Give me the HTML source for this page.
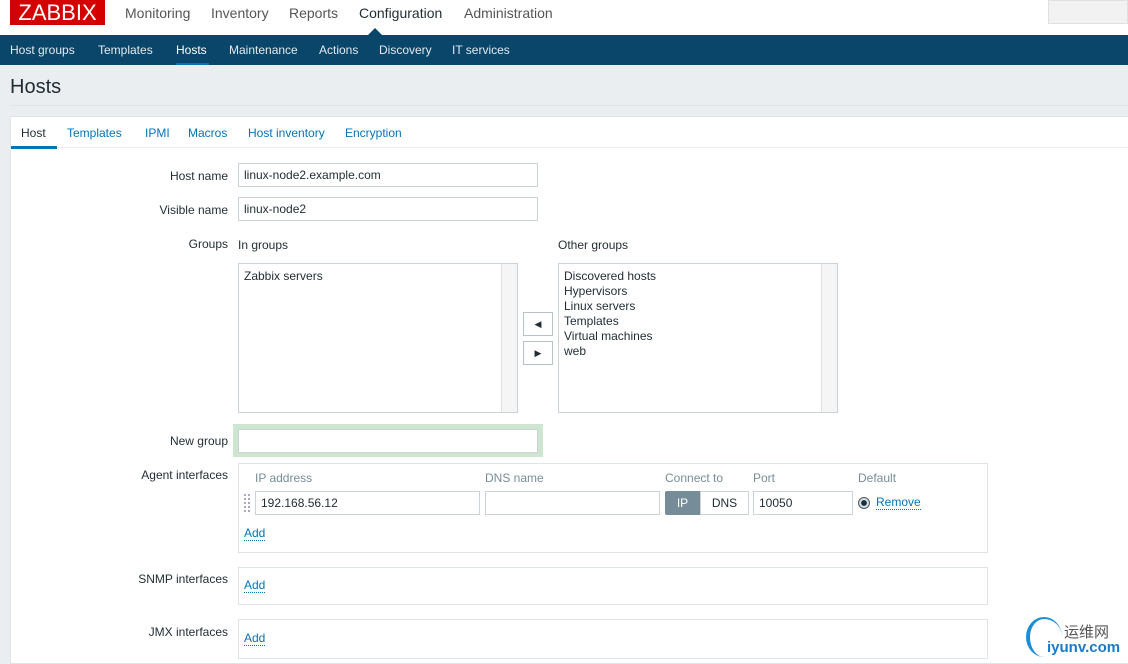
<!DOCTYPE html><html><head><meta charset="utf-8"><style>
*{box-sizing:border-box;margin:0;padding:0}
body{width:1128px;height:664px;overflow:hidden;background:#ebeef0;font-family:"Liberation Sans",Arial,sans-serif;font-size:12px;color:#1f2c33;position:relative}
.a{position:absolute}
.top{left:0;top:0;width:1128px;height:35px;background:#fff}
.logo{left:10px;top:0;width:95px;height:25px;background:#d40000;color:#fff;font-size:22px;line-height:25px;text-align:center;letter-spacing:0}
.mm{top:5px;font-size:14px;color:#555}
.nav{left:0;top:35px;width:1128px;height:30px;background:#0a466a}
.nav span{position:absolute;top:8px;color:#e2e9ee;font-size:12px}
.panel{left:10px;top:116px;width:1118px;height:548px;background:#fff;border:1px solid #dfe4e7;border-right:none}
.tab{top:126px;color:#0275b8}
.lbl{color:#1f2c33;text-align:right;width:200px;left:28px}
.in{border:1px solid #cbd3d8;background:#fff;height:24px;padding:0 5px;line-height:22px;font-size:12px}
.lnk{color:#0275b8;border-bottom:1px dotted #0275b8;line-height:13px}
.gray{color:#768d99}
.box{border:1px solid #dfe4e7}
.lb{border:1px solid #cbd3d8;background:#fff;padding:5px;line-height:15px}
.sb{position:absolute;right:0;top:0;width:16px;height:100%;background:#f5f5f5;border-left:1px solid #e0e0e0}
.btn{border:1px solid #b7c3ca;background:#fff;width:30px;height:24px;text-align:center;line-height:22px;font-size:9px}
</style></head><body>
<div class="a top"></div>
<div class="a logo">ZABBIX</div>
<div class="a mm" style="left:125px">Monitoring</div>
<div class="a mm" style="left:211px">Inventory</div>
<div class="a mm" style="left:289px">Reports</div>
<div class="a mm" style="left:359px;color:#1f2c33">Configuration</div>
<div class="a mm" style="left:464px">Administration</div>
<div class="a" style="left:1048px;top:0;width:80px;height:24px;background:#f2f2f2;border:1px solid #e0e0e0"></div>
<div class="a" style="top:28px;width:0;height:0;border-left:7px solid transparent;border-right:7px solid transparent;border-bottom:7px solid #0a466a;left:368px"></div>
<div class="a nav">
<span style="left:10px">Host groups</span><span style="left:98px">Templates</span><span style="left:176px;color:#fff">Hosts</span><span style="left:229px">Maintenance</span><span style="left:319px">Actions</span><span style="left:379px">Discovery</span><span style="left:452px">IT services</span>
<div class="a" style="left:176px;top:28px;width:33px;height:2px;background:#0275b8"></div>
</div>
<div class="a" style="left:10px;top:76px;font-size:20px;color:#1f2c33">Hosts</div>
<div class="a" style="left:10px;top:105px;width:1118px;height:1px;background:#dfe4e7"></div>
<div class="a panel"></div>
<div class="a" style="left:11px;top:147px;width:1117px;height:1px;background:#ebeef0"></div>
<div class="a tab" style="left:21px;color:#1f2c33">Host</div>
<div class="a" style="left:11px;top:146px;width:46px;height:3px;background:#0275b8"></div>
<div class="a tab" style="left:67px">Templates</div>
<div class="a tab" style="left:145px">IPMI</div>
<div class="a tab" style="left:188px">Macros</div>
<div class="a tab" style="left:248px">Host inventory</div>
<div class="a tab" style="left:345px">Encryption</div>

<div class="a lbl" style="top:169px">Host name</div>
<div class="a in" style="left:238px;top:163px;width:300px">linux-node2.example.com</div>
<div class="a lbl" style="top:203px">Visible name</div>
<div class="a in" style="left:238px;top:197px;width:300px">linux-node2</div>
<div class="a lbl" style="top:237px">Groups</div>
<div class="a" style="left:238px;top:238px">In groups</div>
<div class="a" style="left:558px;top:238px">Other groups</div>
<div class="a lb" style="left:238px;top:263px;width:280px;height:150px">Zabbix servers<div class="sb"></div></div>
<div class="a lb" style="left:558px;top:263px;width:280px;height:150px">Discovered hosts<br>Hypervisors<br>Linux servers<br>Templates<br>Virtual machines<br>web<div class="sb"></div></div>
<div class="a btn" style="left:523px;top:312px">◀</div>
<div class="a btn" style="left:523px;top:341px">▶</div>
<div class="a lbl" style="top:434px">New group</div>
<div class="a" style="left:233px;top:424px;width:310px;height:33px;background:#cde6cf"></div>
<div class="a in" style="left:238px;top:429px;width:300px"></div>
<div class="a lbl" style="top:468px">Agent interfaces</div>
<div class="a box" style="left:238px;top:463px;width:750px;height:90px"></div>
<div class="a gray" style="left:255px;top:471px">IP address</div>
<div class="a gray" style="left:485px;top:471px">DNS name</div>
<div class="a gray" style="left:665px;top:471px">Connect to</div>
<div class="a gray" style="left:753px;top:471px">Port</div>
<div class="a gray" style="left:858px;top:471px">Default</div>
<div class="a" style="left:244px;top:494px;width:6px;height:18px;border-left:2px dotted #aab;border-right:2px dotted #aab"></div>
<div class="a in" style="left:255px;top:491px;width:225px">192.168.56.12</div>
<div class="a in" style="left:485px;top:491px;width:175px"></div>
<div class="a" style="left:665px;top:491px;width:35px;height:24px;background:#768d99;color:#fff;text-align:center;line-height:24px;border-radius:2px 0 0 2px">IP</div>
<div class="a in" style="left:700px;top:491px;width:49px;text-align:center">DNS</div>
<div class="a in" style="left:753px;top:491px;width:100px">10050</div>
<div class="a" style="left:858px;top:497px;width:12px;height:12px;border-radius:50%;border:1px solid #555;background:radial-gradient(#1f2c33 35%,#cfe0ee 45%)"></div>
<div class="a lnk" style="left:876px;top:496px">Remove</div>
<div class="a lnk" style="left:244px;top:527px">Add</div>
<div class="a lbl" style="top:572px">SNMP interfaces</div>
<div class="a box" style="left:238px;top:567px;width:750px;height:38px"></div>
<div class="a lnk" style="left:244px;top:579px">Add</div>
<div class="a lbl" style="top:625px">JMX interfaces</div>
<div class="a box" style="left:238px;top:619px;width:750px;height:40px"></div>
<div class="a lnk" style="left:244px;top:632px">Add</div>
<div class="a" style="left:1026px;top:617px;width:36px;height:40px;border-radius:50%;border-left:4px solid #1a8fd8;border-top:2px solid #1a8fd8"></div>
<div class="a" style="left:1064px;top:621px;font-size:15px;color:#555;font-family:'Liberation Sans','Noto Sans CJK SC',sans-serif">运维网</div>
<div class="a" style="left:1047px;top:639px;font-size:15px;font-weight:bold;color:#1a7ac8">iyunv.com</div>
</body></html>
